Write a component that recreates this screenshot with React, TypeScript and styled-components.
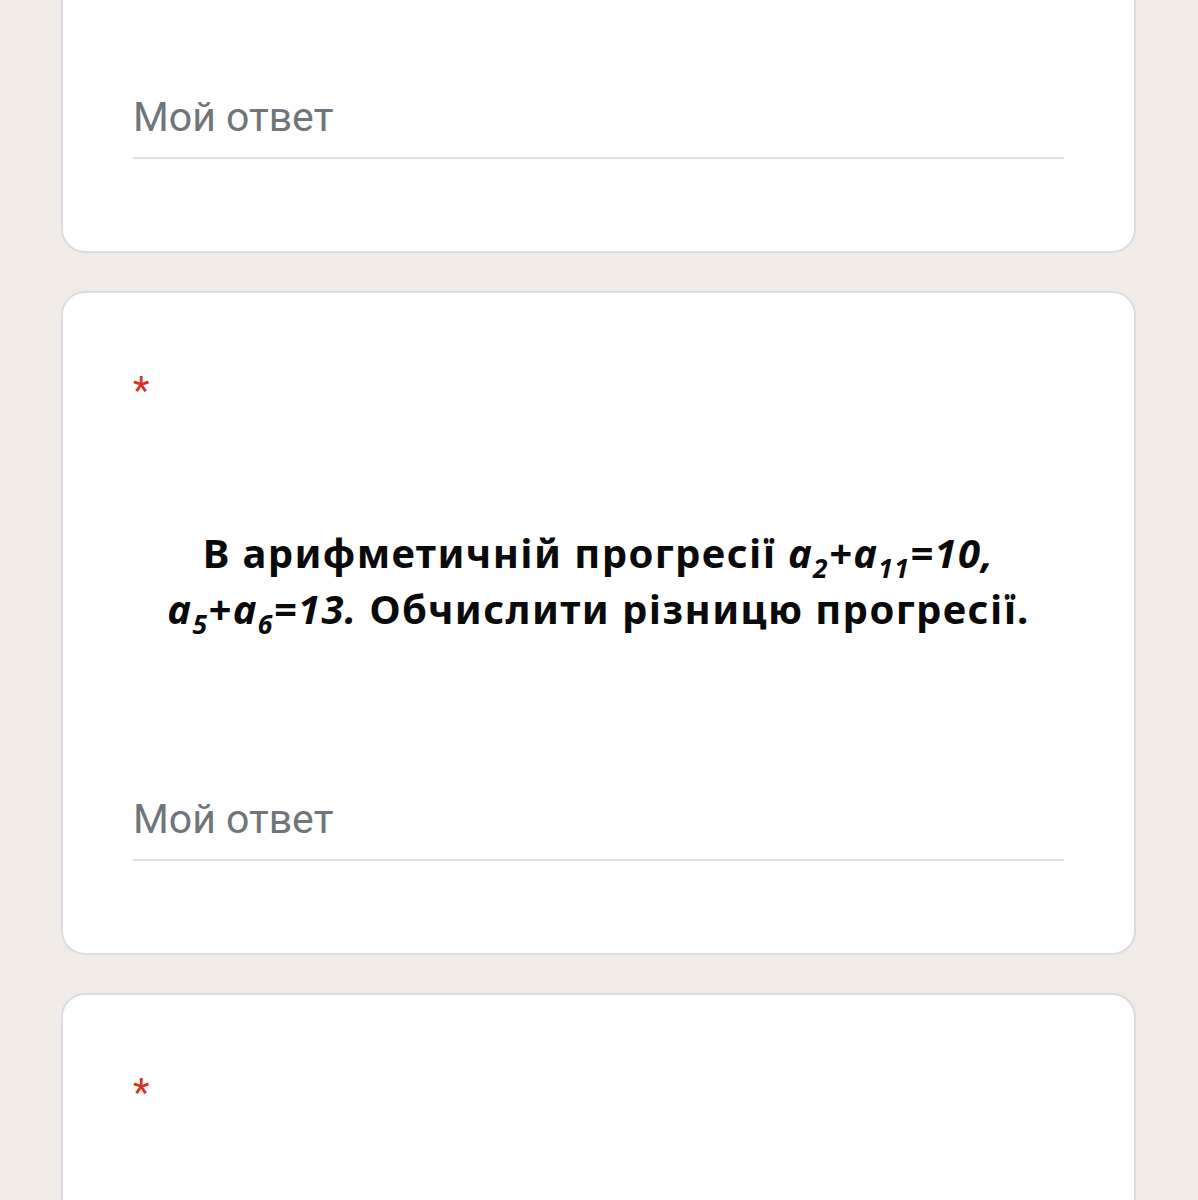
import React from "react";
import styled, { createGlobalStyle } from "styled-components";

const GlobalStyle = createGlobalStyle`
  html, body {
    margin: 0;
    padding: 0;
    background: #f1ebe7;
  }
  body {
    font-family: Roboto, "Noto Sans", Arial, sans-serif;
  }
`;

const Page = styled.div`
  display: flex;
  flex-direction: column;
  gap: 38px;
  padding: 0 62px 40px 61px;
  margin-top: -49px;
`;

const Card = styled.section<{ minHeight?: number }>`
  background: #ffffff;
  border: 2px solid #dadce0;
  border-radius: 24px;
  padding: 0 70px 92px 70px;
  min-height: ${({ minHeight }) => (minHeight ? `${minHeight}px` : "auto")};
  display: flex;
  flex-direction: column;
`;

const TopSpacer = styled.div`
  height: 140px;
`;

const Required = styled.div`
  margin-top: 79px;
  font-family: Roboto, Arial, sans-serif;
  font-size: 38px;
  line-height: 38px;
  color: #d93025;
`;

const QuestionText = styled.div`
  margin-top: 115px;
  text-align: center;
  font-family: "Noto Sans", "Open Sans", Arial, sans-serif;
  font-weight: 700;
  font-size: 40px;
  letter-spacing: 1.4px;
  line-height: 56px;
  color: #0a0a0a;
`;

const Math = styled.i`
  font-style: italic;
`;

const Sub = styled.sub`
  font-size: 0.66em;
  line-height: 0;
  vertical-align: -0.36em;
`;

const AnswerField = styled.div<{ gap: number }>`
  margin-top: ${({ gap }) => gap}px;
  padding-bottom: 16px;
  border-bottom: 2px solid #e0e0e0;
  font-family: Roboto, Arial, sans-serif;
  font-size: 41px;
  line-height: 48px;
  color: #70757a;
`;

const App: React.FC = () => {
  return (
    <>
      <GlobalStyle />
      <Page>
        <Card>
          <TopSpacer />
          <AnswerField gap={0}>Мой ответ</AnswerField>
        </Card>

        <Card>
          <Required>*</Required>
          <QuestionText>
            В арифметичній прогресії{" "}
            <Math>
              a<Sub>2</Sub>+a<Sub>11</Sub>=10,
            </Math>
            <br />
            <Math>
              a<Sub>5</Sub>+a<Sub>6</Sub>=13.
            </Math>{" "}
            Обчислити різницю прогресії.
          </QuestionText>
          <AnswerField gap={158}>Мой ответ</AnswerField>
        </Card>

        <Card minHeight={400}>
          <Required>*</Required>
        </Card>
      </Page>
    </>
  );
};

export default App;
